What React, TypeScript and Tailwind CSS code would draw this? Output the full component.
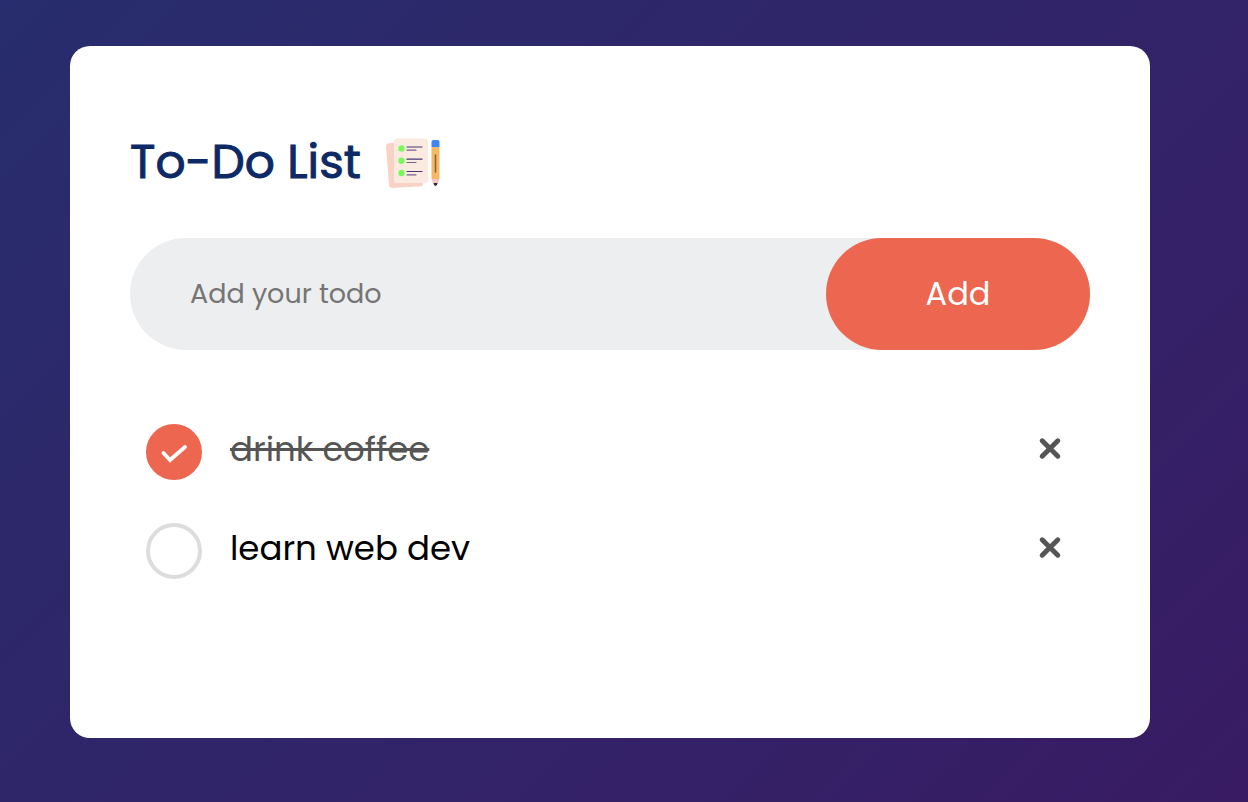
import { useState } from "react";
import type { FormEvent } from "react";

type Task = { id: number; text: string; done: boolean };

const initialTasks: Task[] = [
  { id: 1, text: "drink coffee", done: true },
  { id: 2, text: "learn web dev", done: false },
];

function ListIcon() {
  return (
    <svg viewBox="0 0 60 60" className="size-15 shrink-0" aria-hidden="true">
      <path d="M2 11.5 L34 7.5 L38 53 Q38 54 36 54.2 L6.500 56 Q4.500 56 4.200 54 L1 14 Q1 11.700 3 11.300Z" fill="#f8d2c4" />
      <rect x="9" y="6.500" width="34" height="44.500" rx="2.500" fill="#fbeadf" />
      <g fill="#7bfa5b">
        <circle cx="16.500" cy="16.500" r="3.200" />
        <circle cx="16.500" cy="28.800" r="3.200" />
        <circle cx="16.500" cy="41" r="3.200" />
      </g>
      <g stroke="#453873" strokeWidth="1.200" strokeLinecap="round">
        <path d="M22 15H37M22 27.200H37M22 39.500H37" />
        <path d="M22 18.200H31M22 30.500H31M22 42.800H31" stroke="#77628b" />
      </g>
      <path d="M46.500 15H54.500V47H46.500Z" fill="#f4b962" />
      <path d="M46.500 15V10Q46.500 8 48.500 8H52.500Q54.500 8 54.500 10V15Z" fill="#3c86f7" />
      <path d="M46.500 47H54.500L53 51.500H48Z" fill="#f6c3c9" />
      <path d="M48.500 51H52.500L52 53L50.500 54L49 53Z" fill="#33282b" />
      <path d="M50.500 23V40" stroke="#876039" strokeWidth="1.500" strokeLinecap="round" />
    </svg>
  );
}

export default function App() {
  const [tasks, setTasks] = useState(initialTasks);
  const [draft, setDraft] = useState("");

  const addTask = (event: FormEvent) => {
    event.preventDefault();
    const text = draft.trim();
    if (!text) return;
    setTasks([...tasks, { id: Date.now(), text, done: false }]);
    setDraft("");
  };

  const toggle = (id: number) =>
    setTasks(tasks.map((t) => (t.id === id ? { ...t, done: !t.done } : t)));

  return (
    <main className="min-h-screen bg-linear-135 from-[#272d6e] to-[#381b63] pt-[46px] pr-[98px] pb-16 pl-[70px] font-['Poppins','Inter',sans-serif]">
      <section className="rounded-[20px] bg-white px-[60px] pt-20 pb-[138px]">
        <h1 className="mb-10 flex h-[72px] items-center gap-6 text-[47px] font-normal text-[#0d2966] [-webkit-text-stroke:1px_#0d2966]">
          To-Do List
          <ListIcon />
        </h1>
        <form onSubmit={addTask} className="mb-[52px] flex h-28 items-stretch rounded-full bg-[#edeef0]">
          <input
            type="text"
            aria-label="Add your todo"
            placeholder="Add your todo"
            value={draft}
            onChange={(e) => setDraft(e.target.value)}
            className="min-w-0 flex-1 bg-transparent pl-[60px] text-[27px] text-black outline-none placeholder:text-[#757575]"
          />
          <button type="submit" className="w-[264px] rounded-full bg-[#ed6650] text-[32px] text-white">
            Add
          </button>
        </form>
        <ul>
          {tasks.map((task) => (
            <li key={task.id} className="flex h-[99px] items-center pr-5 pl-4">
              <label className="flex flex-1 cursor-pointer items-center gap-7">
                <span className="grid size-14 shrink-0 place-items-center">
                  <input
                    type="checkbox"
                    checked={task.done}
                    onChange={() => toggle(task.id)}
                    className="peer col-start-1 row-start-1 size-14 appearance-none rounded-full border-4 border-[#dddddd] checked:border-[#ed6650] checked:bg-[#ed6650]"
                  />
                  <svg
                    viewBox="0 0 56 56"
                    className="pointer-events-none col-start-1 row-start-1 hidden size-14 peer-checked:block"
                    aria-hidden="true"
                  >
                    <path d="M17.500 29L24 36L39 23" fill="none" stroke="white" strokeWidth="3.800" strokeLinecap="round" />
                  </svg>
                </span>
                <span
                  className={
                    task.done
                      ? "pb-1 text-[34px] text-[#555555] line-through decoration-[3px]"
                      : "pb-1 text-[34px] text-black"
                  }
                >
                  {task.text}
                </span>
              </label>
              <button
                type="button"
                aria-label={`Delete ${task.text}`}
                onClick={() => setTasks(tasks.filter((t) => t.id !== task.id))}
                className="mb-2 grid size-10 place-items-center text-[#555555]"
              >
                <svg viewBox="0 0 40 40" className="size-10" aria-hidden="true">
                  <path d="M12.200 12.800L27.800 28.200M27.800 12.800L12.200 28.200" stroke="currentColor" strokeWidth="5" strokeLinecap="round" />
                </svg>
              </button>
            </li>
          ))}
        </ul>
      </section>
    </main>
  );
}
